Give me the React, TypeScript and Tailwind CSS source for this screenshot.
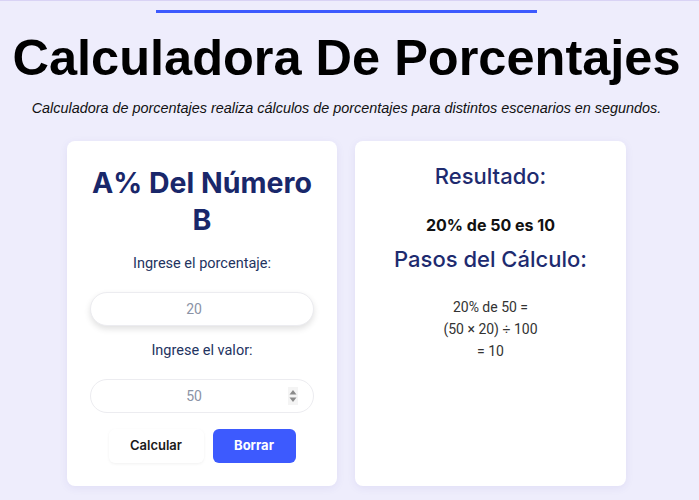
import React from 'react';

const Spinner: React.FC = () => (
    <svg width="10" height="18" viewBox="0 0 10 18" className="absolute right-[16px] top-1/2 -translate-y-1/2">
        <rect x="0" y="0" width="10" height="18" fill="#f4f4f4" />
        <path d="M1.5 7.5 L5 3 L8.5 7.5 Z" fill="#8a8a8a" />
        <path d="M1.5 10.5 L5 15 L8.5 10.5 Z" fill="#8a8a8a" />
    </svg>
);

const Field: React.FC<{ label: string; placeholder: string; spinner?: boolean; shadow?: boolean }> = ({ label, placeholder, spinner, shadow }) => (
    <div className="flex flex-col items-center">
        <label className="text-[14.5px] leading-5 text-[#23335f]">{label}</label>
        <div className="relative -mx-[1px] self-stretch mt-[18px]">
            <input
                type="text"
                placeholder={placeholder}
                className={`block w-full h-[34px] rounded-full border border-[#ececf0] bg-white pr-4 text-center text-[14px] placeholder:text-[#8b93a6] outline-none ${shadow ? 'shadow-[0_3px_6px_rgba(0,0,0,0.12)]' : ''}`}
            />
            {spinner && <Spinner />}
        </div>
    </div>
);

const App: React.FC = () => {
    return (
        <div className="min-h-[500px] bg-[#eeedfc] border-t border-[#d9d3f5] pr-[6px] flex flex-col items-center" style={{ fontFamily: 'Roboto, "Liberation Sans", sans-serif' }}>
            <div className="mt-[9px] w-[381px] h-[3px] bg-[#3d5afe]" />
            <h1 className="mt-[17px] text-[50.5px] leading-[56px] font-bold text-black whitespace-nowrap" style={{ fontFamily: '"Liberation Sans", Arial, sans-serif' }}>
                Calculadora De Porcentajes
            </h1>
            <p className="mt-[12px] text-[14.4px] leading-5 italic text-[#111] whitespace-nowrap" style={{ fontFamily: '"Liberation Sans", Arial, sans-serif' }}>
                Calculadora de porcentajes realiza cálculos de porcentajes para distintos escenarios en segundos.
            </p>

            <div className="mt-[23px] grid grid-cols-[270px_271px] gap-[18px]">
                <div className="bg-white rounded-lg shadow-[0_2px_8px_rgba(60,50,160,0.08)] px-6 pt-[23px] pb-[23px]">
                    <h2 className="-mx-[6px] text-center text-[28.5px] leading-[37px] font-bold text-[#19276a]" style={{ fontFamily: 'Inter, sans-serif' }}>
                        A% Del Número B
                    </h2>
                    <div className="mt-[16px]">
                        <Field label="Ingrese el porcentaje:" placeholder="20" shadow />
                    </div>
                    <div className="mt-[15px]">
                        <Field label="Ingrese el valor:" placeholder="50" spinner />
                    </div>
                    <div className="mt-[16px] flex justify-center gap-[9px]" style={{ fontFamily: 'Inter, sans-serif' }}>
                        <button className="w-[95px] h-[34px] rounded-md bg-white text-[13px] font-semibold text-[#1a1a1a] shadow-[0_1px_3px_rgba(0,0,0,0.06)]">
                            Calcular
                        </button>
                        <button className="w-[83px] h-[34px] rounded-md bg-[#3d5afe] text-[13px] font-bold text-white">
                            Borrar
                        </button>
                    </div>
                </div>

                <div className="bg-white rounded-lg shadow-[0_2px_8px_rgba(60,50,160,0.08)] px-6 pt-[20px] flex flex-col items-center" style={{ fontFamily: 'Inter, sans-serif' }}>
                    <h3 className="text-[22px] leading-[30px] font-medium text-[#1e2b6f]">Resultado:</h3>
                    <p className="mt-[22px] text-[16px] leading-6 font-bold text-[#111]">20% de 50 es 10</p>
                    <h3 className="mt-[7px] text-[22px] leading-[30px] font-medium text-[#1e2b6f]">Pasos del Cálculo:</h3>
                    <div className="mt-[22px] text-center text-[14px] leading-[22px] text-[#333]" style={{ fontFamily: 'Roboto, sans-serif' }}>
                        <p>20% de 50 =</p>
                        <p>(50 × 20) ÷ 100</p>
                        <p>= 10</p>
                    </div>
                </div>
            </div>
        </div>
    );
};

export default App;
